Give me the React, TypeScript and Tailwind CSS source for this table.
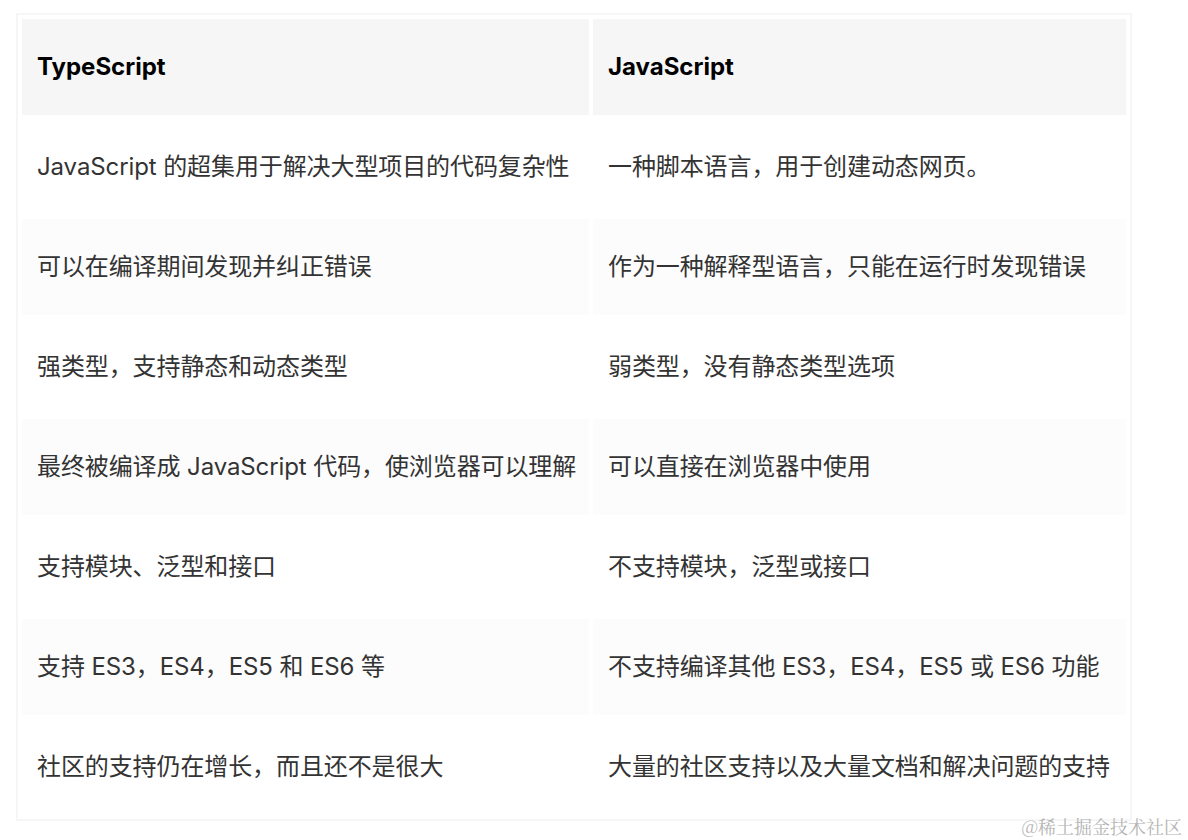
import React from "react";

const rows: [string, string][] = [
  ["JavaScript 的超集用于解决大型项目的代码复杂性", "一种脚本语言，用于创建动态网页。"],
  ["可以在编译期间发现并纠正错误", "作为一种解释型语言，只能在运行时发现错误"],
  ["强类型，支持静态和动态类型", "弱类型，没有静态类型选项"],
  ["最终被编译成 JavaScript 代码，使浏览器可以理解", "可以直接在浏览器中使用"],
  ["支持模块、泛型和接口", "不支持模块，泛型或接口"],
  ["支持 ES3，ES4，ES5 和 ES6 等", "不支持编译其他 ES3，ES4，ES5 或 ES6 功能"],
  ["社区的支持仍在增长，而且还不是很大", "大量的社区支持以及大量文档和解决问题的支持"],
];

export default function App() {
  return (
    <div
      className="relative w-[1188px] h-[840px] bg-white overflow-hidden"
      style={{ fontFamily: 'Inter, "Noto Sans CJK SC", sans-serif' }}
    >
      <div className="pl-[16px] pt-[13px]">
        <table className="table-fixed w-[1116px] border-separate border-spacing-[4px] border-2 border-[#f6f6f6] text-[24px] leading-[48px] text-[#333]">
          <colgroup>
            <col className="w-[567px]" />
            <col className="w-[533px]" />
          </colgroup>
          <thead className="bg-[#f6f6f6] text-left text-black">
            <tr>
              <th className="px-[15px] py-[24px] font-bold">TypeScript</th>
              <th className="px-[15px] py-[24px] font-bold">JavaScript</th>
            </tr>
          </thead>
          <tbody>
            {rows.map((r, i) => (
              <tr key={i} className={i % 2 === 1 ? "bg-[#fcfcfd]" : "bg-white"}>
                <td className="px-[15px] py-[24px] whitespace-nowrap tracking-[-0.1px]">{r[0]}</td>
                <td className="px-[15px] py-[24px] whitespace-nowrap tracking-[-0.1px]">{r[1]}</td>
              </tr>
            ))}
          </tbody>
        </table>
      </div>
      <div
        className="absolute right-[6px] top-[814px] text-[18px] leading-[24px] text-[#b4b4b4]"
        style={{ fontFamily: '"Noto Serif CJK SC", "Noto Sans CJK SC", serif' }}
      >
        @稀土掘金技术社区
      </div>
    </div>
  );
}
